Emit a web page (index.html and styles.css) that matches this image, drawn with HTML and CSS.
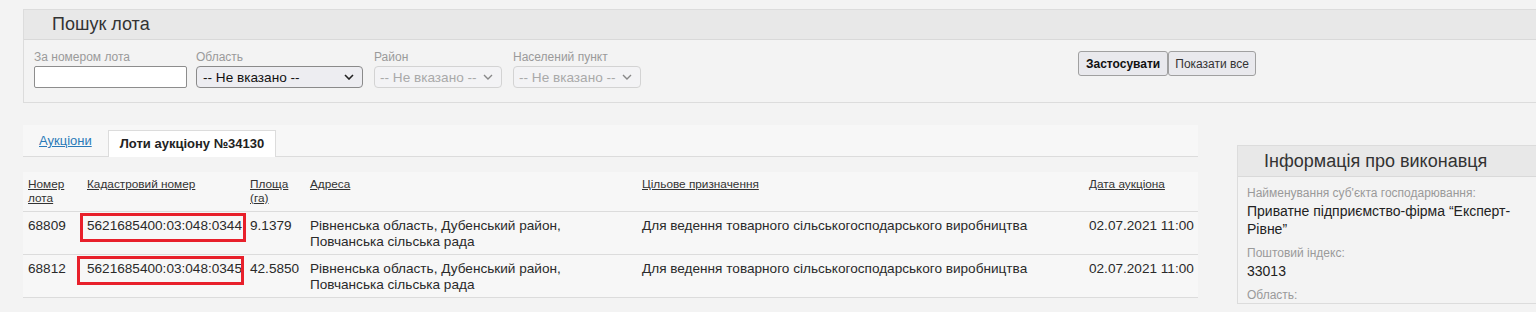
FILE: index.html
```html
<!DOCTYPE html>
<html lang="uk">
<head>
  <meta charset="UTF-8" />
  <title>Пошук лота</title>
  <link rel="stylesheet" href="styles.css">
</head>
<body>
  <div class="search-panel">
    <div class="panel-head">Пошук лота</div>
    <div class="search-body">
      <div class="field">
        <label>За номером лота</label>
        <input type="text" class="lot-input" />
      </div>
      <div class="field">
        <label>Область</label>
        <span class="select-wrap w-region">
          <select><option>-- Не вказано --</option></select>
          <svg class="chev" width="10" height="6" viewBox="0 0 10 6"><path d="M1 1l4 4 4-4" fill="none" stroke="#222" stroke-width="1.6"/></svg>
        </span>
      </div>
      <div class="field">
        <label>Район</label>
        <span class="select-wrap w-small disabled">
          <select disabled><option>-- Не вказано --</option></select>
          <svg class="chev" width="10" height="6" viewBox="0 0 10 6"><path d="M1 1l4 4 4-4" fill="none" stroke="#888" stroke-width="1.4"/></svg>
        </span>
      </div>
      <div class="field">
        <label>Населений пункт</label>
        <span class="select-wrap w-small disabled">
          <select disabled><option>-- Не вказано --</option></select>
          <svg class="chev" width="10" height="6" viewBox="0 0 10 6"><path d="M1 1l4 4 4-4" fill="none" stroke="#888" stroke-width="1.4"/></svg>
        </span>
      </div>
      <div class="actions">
        <button class="btn btn-main">Застосувати</button><button class="btn">Показати все</button>
      </div>
    </div>
  </div>

  <div class="main">
    <div class="content">
      <div class="tabs">
        <a href="#" class="tab-link">Аукціони</a>
        <span class="tab-active">Лоти аукціону №34130</span>
      </div>
      <table class="lots">
        <thead>
          <tr>
            <th class="c1"><a href="#">Номер лота</a></th>
            <th class="c2"><a href="#">Кадастровий номер</a></th>
            <th class="c3"><a href="#">Площа (га)</a></th>
            <th class="c4"><a href="#">Адреса</a></th>
            <th class="c5"><a href="#">Цільове призначення</a></th>
            <th class="c6"><a href="#">Дата аукціона</a></th>
          </tr>
        </thead>
        <tbody>
          <tr>
            <td>68809</td>
            <td class="cad"><span class="mark mark-1"></span>5621685400:03:048:0344</td>
            <td>9.1379</td>
            <td>Рівненська область, Дубенський район,<br>Повчанська сільська рада</td>
            <td>Для ведення товарного сільськогосподарського виробництва</td>
            <td class="date">02.07.2021 11:00</td>
          </tr>
          <tr>
            <td>68812</td>
            <td class="cad"><span class="mark mark-2"></span>5621685400:03:048:0345</td>
            <td>42.5850</td>
            <td>Рівненська область, Дубенський район,<br>Повчанська сільська рада</td>
            <td>Для ведення товарного сільськогосподарського виробництва</td>
            <td class="date">02.07.2021 11:00</td>
          </tr>
        </tbody>
      </table>
    </div>

    <div class="side-panel">
      <div class="panel-head side-head">Інформація про виконавця</div>
      <div class="side-body">
        <div class="info-label">Найменування суб'єкта господарювання:</div>
        <div class="info-value">Приватне підприємство-фірма “Експерт-Рівне”</div>
        <div class="info-label">Поштовий індекс:</div>
        <div class="info-value">33013</div>
        <div class="info-label">Область:</div>
      </div>
    </div>
  </div>
</body>
</html>
```

FILE: styles.css
```css
* {
  box-sizing: border-box;
}
body {
  margin: 0;
  background: #f3f3f3;
  font-family: 'Liberation Sans', Arial, sans-serif;
  font-size: 14px;
  color: #333;
  overflow: hidden;
}
.search-panel {
  margin: 9px -20px 0 23px;
  border: 1px solid #dcdcdc;
}
.panel-head {
  height: 30px;
  line-height: 29px;
  padding-left: 28px;
  background: #e8e8e8;
  border-bottom: 1px solid #d9d9d9;
  font-size: 18px;
  color: #333;
}
.search-body {
  display: flex;
  align-items: flex-start;
  padding: 10px 10px 14px;
}
.field {
  display: flex;
  flex-direction: column;
  margin-right: 11px;
}
.field:first-child {
  margin-right: 9px;
}
.field label {
  font-size: 12px;
  line-height: 14px;
  color: #9a9a9a;
  margin-bottom: 2px;
}
.lot-input {
  width: 153px;
  height: 22px;
  border: 1px solid #8d8d8d;
  border-radius: 2px;
  background: #fff;
  font: inherit;
}
.select-wrap {
  position: relative;
  display: inline-block;
  height: 22px;
}
.select-wrap select {
  appearance: none;
  -webkit-appearance: none;
  width: 100%;
  height: 22px;
  padding: 0 0 0 6px;
  border: 1px solid #8a8a8a;
  border-radius: 4px;
  background: #ededf1;
  font-family: inherit;
  font-size: 13.6px;
  color: #111;
}
.select-wrap .chev {
  position: absolute;
  right: 9px;
  top: 8px;
  pointer-events: none;
}
.w-region {
  width: 167px;
}
.w-small {
  width: 128px;
}
.select-wrap.disabled select {
  background: #f4f4f6;
  border-color: #c6c6c6;
  color: #8a8a8a;
  padding-left: 5px;
}
.actions {
  display: flex;
  margin-left: 426px;
  margin-top: 1px;
}
.btn {
  height: 25px;
  padding: 0 6px;
  font-family: inherit;
  font-size: 12px;
  color: #333;
  background: #e9e9ed;
  border: 1px solid #a0a0a0;
  border-radius: 3px;
}
.btn-main {
  font-weight: bold;
  color: #111;
  padding: 0 7px;
}
.main {
  display: flex;
  align-items: flex-start;
  margin: 22px 0 0 23px;
  gap: 39px;
}
.content {
  width: 1175px;
  flex-shrink: 0;
}
.tabs {
  display: flex;
  align-items: flex-end;
  height: 32px;
  padding-left: 16px;
  background: #f7f7f7;
  border-bottom: 1px solid #dcdcdc;
}
.tab-link {
  font-size: 13px;
  color: #2a7ab8;
  margin-right: 16px;
  margin-bottom: 8px;
}
.tab-active {
  background: #fff;
  border: 1px solid #dcdcdc;
  border-bottom: none;
  height: 27px;
  line-height: 26px;
  margin-bottom: -1px;
  padding: 0 11px;
  font-size: 13px;
  font-weight: bold;
  color: #222;
}
.lots {
  width: 100%;
  margin-top: 15px;
  border-collapse: collapse;
  background: #f7f7f7;
  table-layout: fixed;
}
.lots th {
  text-align: left;
  font-weight: normal;
  font-size: 11.8px;
  line-height: 14px;
  padding: 5px 5px 6px;
  vertical-align: top;
  border-bottom: 1px solid #dcdcdc;
}
.lots th a {
  color: #333;
}
.lots td {
  padding: 6px 5px 4px;
  font-size: 13.6px;
  line-height: 16px;
  vertical-align: top;
  color: #2a2a2a;
  border-bottom: 1px solid #dcdcdc;
}
.lots td.date {
  white-space: nowrap;
}
.c1 { width: 59px; }
.c2 { width: 163px; }
.c3 { width: 60px; }
.c4 { width: 332px; }
.c5 { width: 447px; }
.c6 { width: 114px; }
.lots td.cad {
  position: relative;
}
.mark {
  position: absolute;
  border: 3px solid #e8202b;
  height: 29px;
}
.mark-1 {
  left: -2px;
  top: 1px;
  width: 166px;
}
.mark-2 {
  left: -5px;
  top: 1px;
  width: 167px;
}
.side-panel {
  width: 320px;
  flex-shrink: 0;
  margin-top: 20px;
  border: 1px solid #dcdcdc;
}
.side-head {
  height: 31px;
  line-height: 31px;
  padding-left: 26px;
}
.side-body {
  padding: 8px 40px 0 9px;
}
.info-label {
  font-size: 12px;
  line-height: 15px;
  color: #9a9a9a;
  margin-top: 8px;
}
.info-label:first-child {
  margin-top: 1px;
}
.info-value {
  font-size: 14px;
  line-height: 18px;
  color: #222;
  margin-top: 1px;
}
```
